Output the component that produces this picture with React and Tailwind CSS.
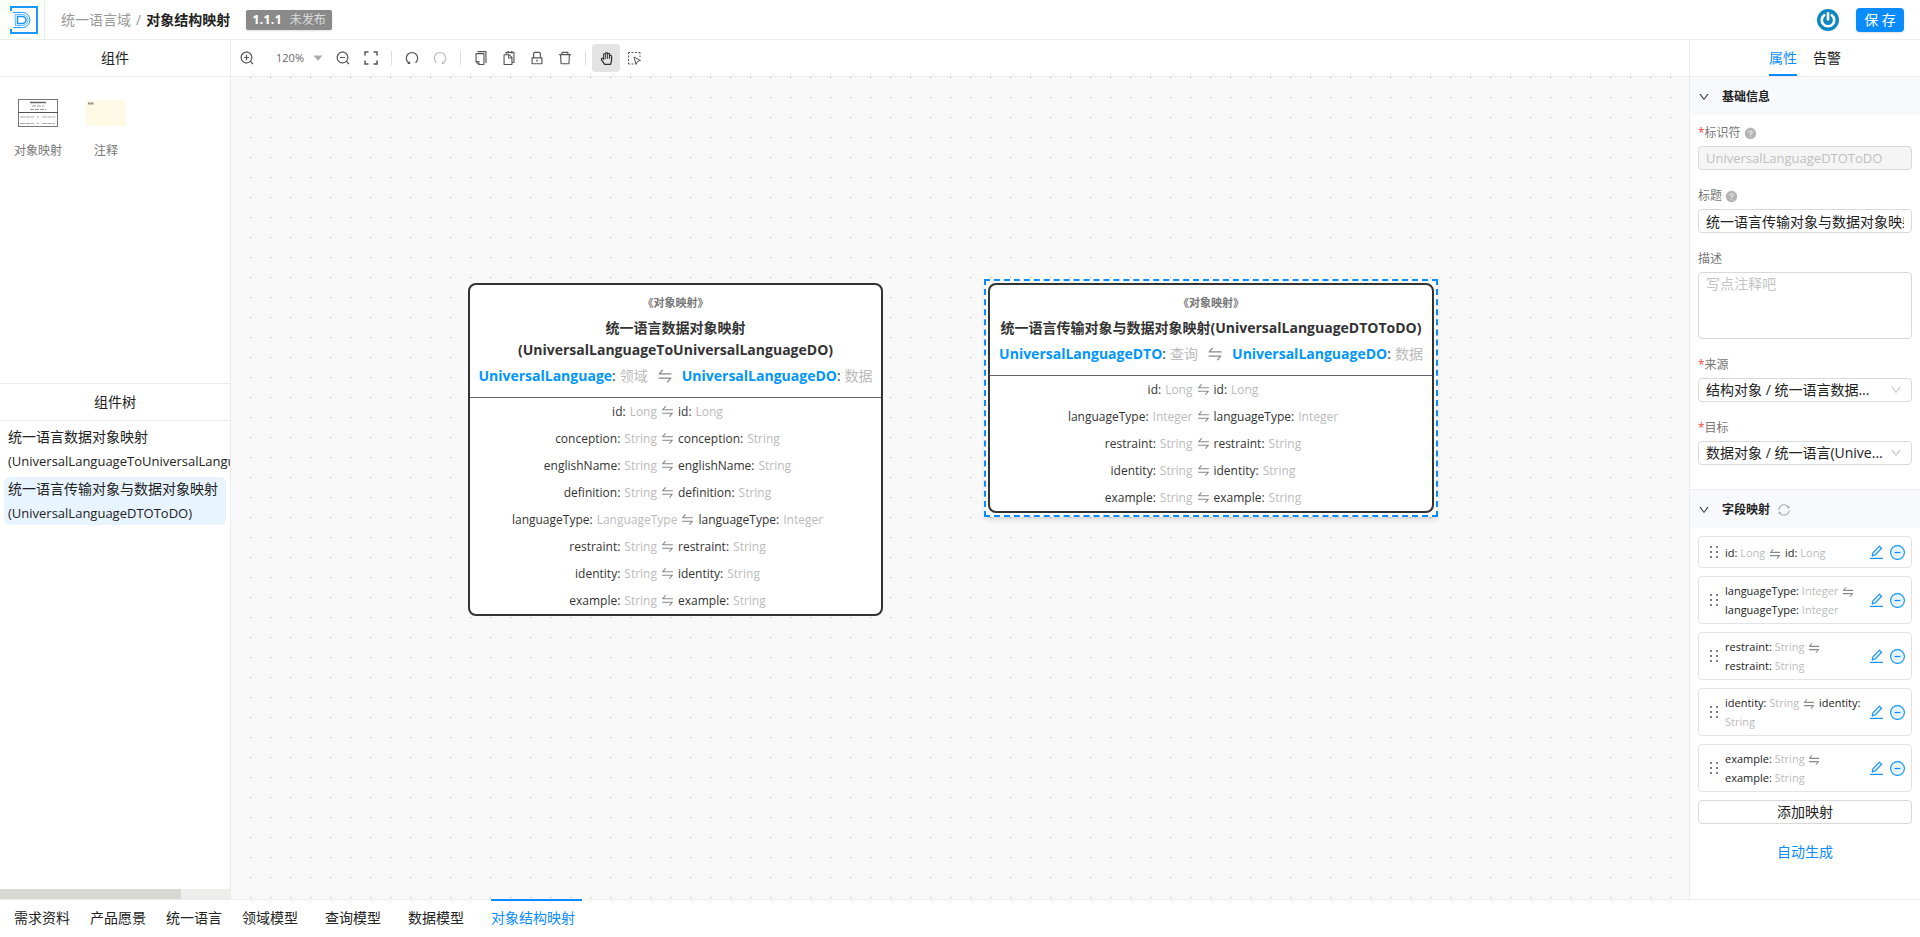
import { useState } from "react";
import {
  AiOutlineZoomIn,
  AiOutlineZoomOut,
  AiOutlineCopy,
  AiOutlineSnippets,
  AiOutlineUndo,
  AiOutlineRedo,
  AiOutlineLock,
  AiOutlineDelete,
  AiOutlineSwap,
  AiOutlineSync,
  AiOutlineDown,
  AiFillCaretDown,
  AiFillQuestionCircle,
} from "react-icons/ai";
import { FaRegHandPaper } from "react-icons/fa";

const sourceCard = {
  title: ["统一语言数据对象映射", "(UniversalLanguageToUniversalLanguageDO)"],
  from: ["UniversalLanguage", "领域"],
  to: ["UniversalLanguageDO", "数据"],
  fields: [
    ["id", "Long", "id", "Long"],
    ["conception", "String", "conception", "String"],
    ["englishName", "String", "englishName", "String"],
    ["definition", "String", "definition", "String"],
    ["languageType", "LanguageType", "languageType", "Integer"],
    ["restraint", "String", "restraint", "String"],
    ["identity", "String", "identity", "String"],
    ["example", "String", "example", "String"],
  ],
};

const targetCard = {
  title: ["统一语言传输对象与数据对象映射(UniversalLanguageDTOToDO)"],
  from: ["UniversalLanguageDTO", "查询"],
  to: ["UniversalLanguageDO", "数据"],
  fields: [
    ["id", "Long", "id", "Long"],
    ["languageType", "Integer", "languageType", "Integer"],
    ["restraint", "String", "restraint", "String"],
    ["identity", "String", "identity", "String"],
    ["example", "String", "example", "String"],
  ],
};

const bottomTabs = [
  { name: "需求资料" },
  { name: "产品愿景" },
  { name: "统一语言" },
  { name: "领域模型", closable: true },
  { name: "查询模型", closable: true },
  { name: "数据模型", closable: true },
  { name: "对象结构映射", closable: true, active: true },
];

function Logo() {
  return (
    <svg width="28" height="28" viewBox="0 0 28 28" fill="none" stroke="#1a98ff">
      <path d="M1 5V1h26v26H1v-4" strokeWidth="2" />
      <path d="M3 6.500h9.500a7.500 7.500 0 0 1 0 15H3.500" />
      <path d="M5 8.500h7.500a5.500 5.500 0 0 1 0 11H5.500z" stroke="#5bb5ff" />
      <path d="M7.500 10.500v7h5a3.500 3.500 0 0 0 0-7z" strokeWidth="1.500" />
    </svg>
  );
}

function Avatar() {
  return (
    <svg width="22" height="22" viewBox="0 0 22 22" fill="none">
      <circle cx="11" cy="11" r="11" fill="#0f86c4" />
      <path d="M7.200 6.200a6.200 6.200 0 1 0 7.600 0" stroke="#fff" strokeWidth="2.600" strokeLinecap="round" />
      <path d="M11 4.300v6.200" stroke="#fff" strokeWidth="2.600" strokeLinecap="round" />
    </svg>
  );
}

function FullscreenIcon() {
  return (
    <svg width="14" height="14" viewBox="0 0 14 14" fill="none" stroke="currentColor" strokeWidth="1.500">
      <path d="M1 4.500V1h3.500M9.500 1H13v3.500M13 9.500V13H9.500M4.500 13H1V9.500" />
    </svg>
  );
}

function MarqueeIcon() {
  return (
    <svg width="13" height="13" viewBox="0 0 13 13" fill="none" stroke="currentColor">
      <path d="M0.500 2V0.500H2M3.500 0.500h2M7 0.500h2M10.500 0.500H12V2M12 3.500v1.500M0.500 3.500v2M0.500 7v2M0.500 10.500V12H2M3.500 12h2" />
      <path d="M6 5l6.500 3.500-3 0.900L8 12.500z" strokeLinejoin="round" />
    </svg>
  );
}

function EditIcon() {
  return (
    <svg width="13" height="14" viewBox="0 0 13 14" fill="none" stroke="#1192ff">
      <path d="M0 13.400h13" strokeWidth="1.200" />
      <path d="M2.200 10.800L2.900 7.900 9.400 1.100l2.200 2.200L5.100 10z" fill="#e6f6ff" strokeWidth="1.200" strokeLinejoin="round" />
    </svg>
  );
}

function RemoveIcon() {
  return (
    <svg width="15" height="15" viewBox="0 0 15 15" fill="none" stroke="#1192ff">
      <circle cx="7.500" cy="7.500" r="6.900" fill="#e6f6ff" strokeWidth="1.100" />
      <path d="M4.500 7.500h6" strokeWidth="1.200" />
    </svg>
  );
}

function DragIcon() {
  return (
    <svg width="8" height="12" viewBox="0 0 8 12" fill="#444">
      <circle cx="1" cy="1" r="0.900" />
      <circle cx="7" cy="1" r="0.900" />
      <circle cx="1" cy="6" r="0.900" />
      <circle cx="7" cy="6" r="0.900" />
      <circle cx="1" cy="11" r="0.900" />
      <circle cx="7" cy="11" r="0.900" />
    </svg>
  );
}

function MappingThumb() {
  return (
    <svg width="40" height="28" viewBox="0 0 40 28" fill="none">
      <rect x="0.500" y="0.500" width="39" height="27" stroke="#777" />
      <path d="M0 13.500h40" stroke="#555" />
      <path d="M12 3.500h16" stroke="#666" strokeWidth="1.500" />
      <path d="M14 7h12M12 10.500h16" stroke="#999" strokeDasharray="4 1" />
      <path d="M2 18h14M24 18h13M2 24.500h14M24 24.500h13" stroke="#aaa" strokeDasharray="5 0.500" />
      <path d="M19 18h2M19 24.500h2" stroke="#aaa" />
    </svg>
  );
}

function NoteThumb() {
  return (
    <svg width="40" height="26" viewBox="0 0 40 26">
      <rect width="40" height="26" fill="#fffae6" />
      <path d="M2 3.500h6" stroke="#888" strokeWidth="2" strokeDasharray="2.500 0.500" />
    </svg>
  );
}

function ToolButton({ label, active, disabled, children }) {
  return (
    <button
      type="button"
      aria-label={label}
      disabled={disabled}
      className={
        "flex h-7 w-7 items-center justify-center rounded-sm " +
        (active ? "bg-[#e3e3e3] text-[#333]" : disabled ? "text-[#bfbfbf]" : "text-[#555]")
      }
    >
      {children}
    </button>
  );
}

function Divider() {
  return <span className="mx-1.5 h-3.5 w-px bg-[#dcdcdc]" />;
}

function PanelTitle({ children }) {
  return (
    <h2 className="flex shrink-0 items-center justify-center text-sm leading-9 text-[#222]">{children}</h2>
  );
}

function MappingCard({ card }) {
  return (
    <article className="rounded-lg border-2 border-[#333] bg-white">
      <header className="flex flex-col items-center border-b border-[#666] px-2 pt-[7px] pb-2.5">
        <p className="text-[11px] leading-[22px] font-bold text-[#777]">《对象映射》</p>
        <h3 className="mt-[3px] text-center text-sm leading-[22px] font-bold text-[#333]">
          {card.title.map((line) => (
            <span key={line} className="block whitespace-nowrap">
              {line}
            </span>
          ))}
        </h3>
        <p className="mt-1 flex items-center text-sm leading-[22px] whitespace-nowrap text-[#333]">
          <a href="#from" className="font-bold text-[#0096ff]">{card.from[0]}</a>
          <span>:</span>
          <span className="ml-1 text-[#bbb]">{card.from[1]}</span>
          <AiOutlineSwap className="mx-2 size-[18px] text-[#888]" />
          <a href="#to" className="font-bold text-[#0096ff]">{card.to[0]}</a>
          <span>:</span>
          <span className="ml-1 text-[#bbb]">{card.to[1]}</span>
        </p>
      </header>
      <ul className="pr-4">
        {card.fields.map((f) => (
          <li key={f[0]} className="flex h-[27px] items-center justify-center text-xs text-[#333]">
            <span>{f[0]}:</span>
            <span className="ml-1 text-[#bbb]">{f[1]}</span>
            <AiOutlineSwap className="mx-[3px] size-[15px] text-[#888]" />
            <span>{f[2]}:</span>
            <span className="ml-1 text-[#bbb]">{f[3]}</span>
          </li>
        ))}
      </ul>
    </article>
  );
}

function SectionHeader({ title, children }) {
  return (
    <h3 className="flex h-[38px] items-center bg-[#f7f9fd] pt-0.5 pl-2 text-xs font-bold text-[#222]">
      <AiOutlineDown className="size-3" />
      <span className="ml-3">{title}</span>
      {children}
    </h3>
  );
}

function Field({ id, label, required, help, children }) {
  return (
    <div className="flex flex-col gap-[3px]">
      <label htmlFor={id} className="flex h-5 items-center text-xs text-[#777]">
        {required && <span className="text-[#f5483b]">*</span>}
        {label}
        {help && <AiFillQuestionCircle className="ml-[3px] size-[13px] text-[#b5b5b5]" />}
      </label>
      {children}
    </div>
  );
}

function SelectBox({ id, value }) {
  return (
    <div className="relative">
      <select
        id={id}
        className="h-6 w-full appearance-none rounded border border-[#d9d9d9] bg-white pr-6 pl-[7px] text-sm leading-[22px] text-[#222]"
      >
        <option>{value}</option>
      </select>
      <AiOutlineDown className="pointer-events-none absolute top-1.5 right-2.5 size-3 text-[#bfbfbf]" />
    </div>
  );
}

function MappingRow({ field }) {
  return (
    <li className="flex min-h-8 items-center rounded border border-[#dfe4ea] py-1 pr-1.5 pl-[11px]">
      <DragIcon />
      <p className="mr-1.5 ml-[7px] flex-1 text-[11px] leading-[19px] text-[#222]">
        {field[0]}: <span className="text-[#bbb]">{field[1]}</span>{" "}
        <AiOutlineSwap className="inline size-3.5 text-[#888]" /> {field[2]}:{" "}
        <span className="text-[#bbb]">{field[3]}</span>
      </p>
      <span className="flex items-center gap-[7px]">
        <button type="button" aria-label={"编辑 " + field[0]}>
          <EditIcon />
        </button>
        <button type="button" aria-label={"删除 " + field[0]}>
          <RemoveIcon />
        </button>
      </span>
    </li>
  );
}

export default function App() {
  const [title, setTitle] = useState("统一语言传输对象与数据对象映射");

  return (
    <div className="flex h-screen flex-col bg-white font-['Open_Sans','Noto_Sans_CJK_SC',sans-serif] text-sm text-[#222]">
      <header className="flex h-10 shrink-0 items-center border-b border-[#ececec]">
        <a href="#home" aria-label="首页" className="flex h-full w-[45px] items-center border-r border-[#ececec] pl-2.5">
          <Logo />
        </a>
        <nav className="ml-4 flex items-center gap-[5px]">
          <a href="#domain" className="text-[#999]">统一语言域</a>
          <span className="text-[#999]">/</span>
          <h1 className="font-bold text-[#222]">对象结构映射</h1>
        </nav>
        <p className="ml-4 flex h-5 items-center gap-2 rounded-xs bg-[#8a8a8a] px-1.5 text-white shadow-sm">
          <b className="text-[13px]">1.1.1</b>
          <span className="text-xs text-[#dcdcdc]">未发布</span>
        </p>
        <div className="mr-4 ml-auto flex items-center gap-[17px]">
          <Avatar />
          <button type="button" className="h-6 w-12 rounded bg-[#0a8cff] text-sm text-white shadow-sm">
            保 存
          </button>
        </div>
      </header>

      <div className="flex min-h-0 flex-1">
        <aside className="flex w-[231px] shrink-0 flex-col border-r border-[#ececec]">
          <section className="flex basis-[343px] flex-col">
            <PanelTitle>组件</PanelTitle>
            <ul className="flex border-t border-[#ececec] pt-[22px] pl-1 text-xs text-[#777]">
              <li className="flex w-[68px] flex-col items-center gap-4">
                <span className="flex h-7 items-center"><MappingThumb /></span>
                <span>对象映射</span>
              </li>
              <li className="flex w-[68px] flex-col items-center gap-4">
                <span className="flex h-7 items-center"><NoteThumb /></span>
                <span>注释</span>
              </li>
            </ul>
          </section>
          <section className="flex min-h-0 flex-1 flex-col border-t border-[#ececec]">
            <PanelTitle>组件树</PanelTitle>
            <ul className="flex min-h-0 flex-1 flex-col gap-1 overflow-hidden border-t border-[#ececec] p-1 leading-6 whitespace-nowrap">
              <li className="pl-1">
                <span className="block">统一语言数据对象映射</span>
                <span className="block text-[13px] leading-6">(UniversalLanguageToUniversalLanguageDO)</span>
              </li>
              <li className="rounded-md bg-[#e8f4ff] pl-1">
                <span className="block">统一语言传输对象与数据对象映射</span>
                <span className="block text-[13px] leading-6">(UniversalLanguageDTOToDO)</span>
              </li>
            </ul>
            <div className="h-2.5 bg-[#eeeeed]">
              <div className="h-full w-[181px] bg-[#d8d8d2]" />
            </div>
          </section>
        </aside>

        <main className="flex min-w-0 flex-1 flex-col">
          <div className="flex h-[37px] shrink-0 items-center border-b border-[#ececec] pl-0.5">
            <ToolButton label="放大"><AiOutlineZoomIn className="size-4" /></ToolButton>
            <button type="button" className="ml-2.5 flex w-[58px] items-center justify-center gap-2 text-[11px] text-[#666]">
              120%
              <AiFillCaretDown className="size-3 text-[#aaa]" />
            </button>
            <ToolButton label="缩小"><AiOutlineZoomOut className="size-4" /></ToolButton>
            <ToolButton label="全屏"><FullscreenIcon /></ToolButton>
            <Divider />
            <ToolButton label="撤销"><AiOutlineUndo className="size-4" /></ToolButton>
            <ToolButton label="重做" disabled><AiOutlineRedo className="size-4" /></ToolButton>
            <Divider />
            <ToolButton label="复制"><AiOutlineCopy className="size-4" /></ToolButton>
            <ToolButton label="粘贴"><AiOutlineSnippets className="size-4" /></ToolButton>
            <ToolButton label="锁定"><AiOutlineLock className="size-4" /></ToolButton>
            <ToolButton label="删除"><AiOutlineDelete className="size-4" /></ToolButton>
            <Divider />
            <ToolButton label="拖动" active><FaRegHandPaper className="size-[13px]" /></ToolButton>
            <ToolButton label="框选"><MarqueeIcon /></ToolButton>
          </div>
          <div className="relative min-h-0 flex-1 overflow-hidden bg-[#f9f9f9]">
            <svg className="absolute inset-0 size-full">
              <defs>
                <pattern id="dots" width="20" height="20" patternUnits="userSpaceOnUse">
                  <rect x="19" y="0" width="1" height="1" fill="#aaa" />
                </pattern>
              </defs>
              <rect width="100%" height="100%" fill="url(#dots)" />
            </svg>
            <div className="absolute top-[206px] left-[237px] w-[415px]">
              <MappingCard card={sourceCard} />
            </div>
            <div className="absolute top-[202px] left-[753px] border-2 border-dashed border-[#0a8cff] p-0.5 shadow-md">
              <div className="w-[446px]">
                <MappingCard card={targetCard} />
              </div>
            </div>
          </div>
        </main>

        <aside className="flex w-[231px] shrink-0 flex-col border-l border-[#ececec]">
          <div className="flex h-[37px] shrink-0 justify-center gap-4 border-b border-[#ececec]" role="tablist">
            <button type="button" role="tab" aria-selected="true" className="border-b-2 border-[#0a8cff] pt-0.5 text-[#0a8cff]">
              属性
            </button>
            <button type="button" role="tab" aria-selected="false" className="border-b-2 border-transparent pt-0.5">
              告警
            </button>
          </div>
          <SectionHeader title="基础信息" />
          <div className="flex flex-col gap-4 px-2 pt-2 pb-6">
            <Field id="identifier" label="标识符" required help>
              <input
                id="identifier"
                disabled
                value="UniversalLanguageDTOToDO"
                className="h-6 w-full rounded border border-[#d9d9d9] bg-[#f5f5f5] px-[7px] text-[13px] text-[#bfbfbf]"
              />
            </Field>
            <Field id="title" label="标题" help>
              <input
                id="title"
                value={title}
                onChange={(e) => setTitle(e.target.value)}
                className="h-6 w-full rounded border border-[#d9d9d9] px-[7px] text-sm text-[#222]"
              />
            </Field>
            <Field id="description" label="描述">
              <textarea
                id="description"
                placeholder="写点注释吧"
                className="h-[67px] w-full resize-none rounded border border-[#d9d9d9] px-[7px] text-sm leading-[22px] placeholder:text-[#c4c4c4]"
              />
            </Field>
            <Field id="source" label="来源" required>
              <SelectBox id="source" value="结构对象 / 统一语言数据..." />
            </Field>
            <Field id="target" label="目标" required>
              <SelectBox id="target" value="数据对象 / 统一语言(Unive..." />
            </Field>
          </div>
          <div className="border-t border-[#ececec]">
            <SectionHeader title="字段映射">
              <button type="button" aria-label="刷新" className="ml-[7px] text-[#aaa]">
                <AiOutlineSync className="size-3.5" />
              </button>
            </SectionHeader>
            <div className="flex flex-col gap-2 px-2 pt-2">
              <ul className="flex flex-col gap-2">
                {targetCard.fields.map((f) => (
                  <MappingRow key={f[0]} field={f} />
                ))}
              </ul>
              <button type="button" className="h-6 rounded border border-[#d9d9d9] text-sm leading-[22px]">
                添加映射
              </button>
              <button type="button" className="mt-2 h-6 text-sm text-[#0a8cff]">
                自动生成
              </button>
            </div>
          </div>
        </aside>
      </div>

      <nav className="flex h-[38px] shrink-0 gap-5 border-t border-[#ececec] pl-3.5">
        {bottomTabs.map((tab) => (
          <a
            key={tab.name}
            href={"#" + tab.name}
            className={
              "-mt-px flex items-center border-t-2 pb-0.5 " +
              (tab.closable ? "pr-[7px] " : "") +
              (tab.active ? "border-[#0a8cff] text-[#0a8cff]" : "border-transparent")
            }
          >
            {tab.name}
          </a>
        ))}
      </nav>
    </div>
  );
}
